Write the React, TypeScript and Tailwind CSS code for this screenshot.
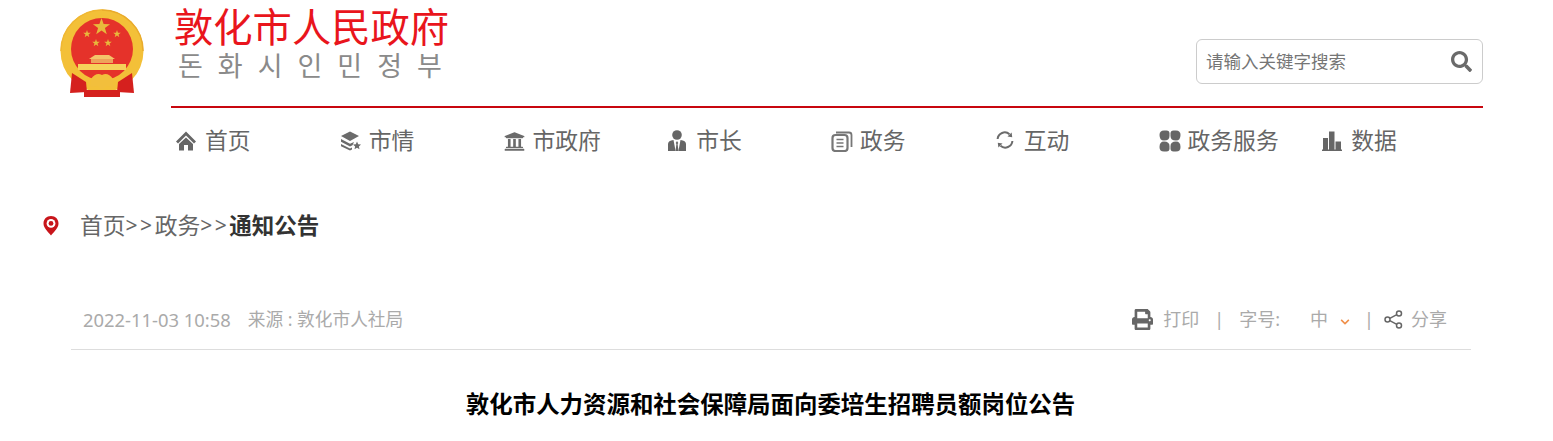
import type { ReactNode } from 'react';
import { FaSearch, FaPrint, FaUniversity, FaChevronDown } from 'react-icons/fa';

const HomeIcon = () => (
  <svg width="20" height="20" viewBox="0 0 20 20" fill="#666">
    <path d="M10 0.5 L20 10.5 L18 12.4 L10 4.6 L2 12.4 L0 10.5 Z" />
    <path d="M10 6.4 L17 13 V19.5 H12 V14 H8 V19.5 H3 V13 Z" />
  </svg>
);

const BooksIcon = () => (
  <svg width="22" height="20" viewBox="0 0 22 20" fill="#6b6b6b">
    <path d="M10 0.5 L19 5 L10 10 L1 5 Z" />
    <path d="M1 8 L10 12.8 L14 11 L12.5 14.2 L10 15.5 L1 10.8 Z" />
    <path d="M1 13 L10 17.5 L12 16.5 L12 18.6 L10 19.6 L1 15.2 Z" />
    <path d="M17 10.5 L18.2 13.2 L21 13.5 L18.9 15.4 L19.5 18.2 L17 16.8 L14.5 18.2 L15.1 15.4 L13 13.5 L15.8 13.2 Z" />
  </svg>
);

const UserIcon = () => (
  <svg width="20" height="22" viewBox="0 0 20 22" fill="#666">
    <circle cx="10" cy="5" r="4.8" />
    <path d="M1 21 V14 C1 11.5 3 10.5 6.5 10 L8.6 21 Z" />
    <path d="M19 21 V14 C19 11.5 17 10.5 13.5 10 L11.4 21 Z" />
    <path d="M10 11 L11.3 13 L10.6 14 L11.5 21 H8.5 L9.4 14 L8.7 13 Z" />
  </svg>
);

const CopyIcon = () => (
  <svg width="22" height="22" viewBox="0 0 22 22" fill="none" stroke="#777" strokeWidth="2.2">
    <rect x="1.5" y="5" width="15" height="16" rx="3" />
    <path d="M5 2.5 H18 Q20.5 2.5 20.5 5 V17" strokeWidth="1.8" />
    <path d="M5.5 9.5 H12.5 M5.5 13 H12.5 M5.5 16.5 H12.5" strokeWidth="1.6" />
  </svg>
);

const RefreshIcon = () => (
  <svg width="20" height="20" viewBox="0 0 20 20" fill="none" stroke="#6b6b6b" strokeWidth="2">
    <path d="M2.6 8 A7.2 7.2 0 0 1 14.5 3.2" />
    <path d="M17.4 10 A7.2 7.2 0 0 1 5.5 14.8" />
    <path d="M12.5 5.6 L17.2 6.2 L16.6 1.4 Z" fill="#6b6b6b" stroke="none" />
    <path d="M7.5 12.4 L2.8 11.8 L3.4 16.6 Z" fill="#6b6b6b" stroke="none" />
  </svg>
);

const GridIcon = () => (
  <svg width="22" height="22" viewBox="0 0 22 22" fill="#666">
    <path d="M5 0.5 H7.5 Q10.5 0.5 10.5 3.5 V6 Q10.5 10.5 5 10.5 Q0.5 10.5 0.5 5 Q0.5 0.5 5 0.5 Z" />
    <path d="M17 0.5 H14.5 Q11.5 0.5 11.5 3.5 V6 Q11.5 10.5 17 10.5 Q21.5 10.5 21.5 5 Q21.5 0.5 17 0.5 Z" />
    <path d="M5 21.5 H7.5 Q10.5 21.5 10.5 18.5 V16 Q10.5 11.5 5 11.5 Q0.5 11.5 0.5 17 Q0.5 21.5 5 21.5 Z" />
    <path d="M17 21.5 H14.5 Q11.5 21.5 11.5 18.5 V16 Q11.5 11.5 17 11.5 Q21.5 11.5 21.5 17 Q21.5 21.5 17 21.5 Z" />
  </svg>
);

const BarsIcon = () => (
  <svg width="20" height="20" viewBox="0 0 20 20" fill="#666">
    <rect x="1" y="7" width="5" height="12" />
    <rect x="7" y="0.5" width="5.5" height="18.5" />
    <rect x="13.5" y="10.5" width="5.5" height="8.5" />
    <rect x="0" y="18.5" width="20" height="1.5" />
  </svg>
);

const ShareIcon = () => (
  <svg width="19" height="19" viewBox="0 0 19 19" fill="none" stroke="#666" strokeWidth="1.5">
    <circle cx="3.5" cy="9.5" r="2.5" />
    <circle cx="15" cy="3.5" r="2.5" />
    <circle cx="15" cy="15.5" r="2.5" />
    <path d="M5.8 8.3 L12.8 4.6 M5.8 10.7 L12.8 14.4" />
  </svg>
);

const PinIcon = () => (
  <svg width="16" height="20" viewBox="0 0 16 20">
    <path d="M8 0 C3.6 0 0.5 3.2 0.5 7.4 C0.5 12 5 15.5 8 19.5 C11 15.5 15.5 12 15.5 7.4 C15.5 3.2 12.4 0 8 0 Z" fill="#c8151b" />
    <circle cx="8" cy="7.4" r="4.4" fill="#fff" />
    <circle cx="8" cy="7.4" r="2.4" fill="#c8151b" />
  </svg>
);

const star = (cx: number, cy: number, r: number) => {
  const pts: string[] = [];
  for (let i = 0; i < 10; i++) {
    const a = (Math.PI / 5) * i - Math.PI / 2;
    const rad = i % 2 === 0 ? r : r * 0.4;
    pts.push(`${(cx + rad * Math.cos(a)).toFixed(2)},${(cy + rad * Math.sin(a)).toFixed(2)}`);
  }
  return pts.join(' ');
};

const Emblem = () => (
  <svg width="84" height="90" viewBox="0 0 84 90" className="blur-[0.5px]">
    <circle cx="42" cy="42" r="41.5" fill="#f3c038" />
    <path d="M42 1 A41 41 0 0 1 83 42" fill="none" stroke="#e9ab2c" strokeWidth="1.5" />
    <path d="M1 42 A41 41 0 0 1 42 1" fill="none" stroke="#f0b733" strokeWidth="1.5" />
    <circle cx="42" cy="40" r="31" fill="#e5322a" />
    <polygon points={star(41.5, 18, 9)} fill="#e8b93c" />
    <polygon points={star(27, 25, 4)} fill="#e8b93c" />
    <polygon points={star(57, 25, 4)} fill="#e8b93c" />
    <polygon points={star(36, 34, 4)} fill="#e8b93c" />
    <polygon points={star(48, 34, 4)} fill="#e8b93c" />
    <path d="M35 46 L29 50 H55 L49 46 Z" fill="#f4c56a" />
    <rect x="31" y="50" width="22" height="4" fill="#eea35a" />
    <rect x="18" y="55" width="48" height="6" fill="#f6d25a" />
    <path d="M12 64 L10 84 L27 83 L26 73 Z" fill="#d5201e" />
    <path d="M72 64 L74 84 L57 83 L58 73 Z" fill="#d5201e" />
    <path d="M24 81 H60 V88 H24 Z" fill="#d5201e" />
    <path d="M31 70 Q36 63 42 66 Q48 63 53 70 L54 78 L46 77 L42 81 L38 77 L30 78 Z" fill="#f2bf3c" />
  </svg>
);

const NavItem = ({ icon, label }: { icon: ReactNode; label: string }) => (
  <a className="flex w-[163.75px] items-center">
    <span className="flex w-[34px] justify-start pl-[5px]">{icon}</span>
    <span>{label}</span>
  </a>
);

const navItems = [
  { icon: <HomeIcon />, label: '首页' },
  { icon: <BooksIcon />, label: '市情' },
  { icon: <FaUniversity size={21} color="#6b6b6b" />, label: '市政府' },
  { icon: <UserIcon />, label: '市长' },
  { icon: <CopyIcon />, label: '政务' },
  { icon: <RefreshIcon />, label: '互动' },
  { icon: <GridIcon />, label: '政务服务' },
  { icon: <BarsIcon />, label: '数据' },
];

export default function App() {
  return (
    <div className="h-[441px] w-[1553px] overflow-hidden bg-white font-['Noto_Sans','Noto_Sans_CJK_SC',sans-serif] text-[#666]">
      <header className="flex items-start pl-[60px]">
        <div className="mr-[27px] mt-[9px] w-[84px]">
          <Emblem />
        </div>
        <div className="w-[1312px]">
          <div className="flex h-[108px] items-start justify-between border-b-2 border-[#c8070f]">
            <div className="pl-[3px]">
              <div className="mt-[4px] text-[39.3px] leading-[46px] text-[#e9151c]">敦化市人民政府</div>
              <div className="pl-[4px] font-['Noto_Sans_CJK_KR',sans-serif] text-[27px] leading-[30px] tracking-[15px] text-[#8a8a8a]">
                돈화시인민정부
              </div>
            </div>
            <div className="mt-[39px] flex h-[45px] w-[287px] items-center justify-between rounded-[6px] border border-[#ccc] pl-[9px] pr-[10px]">
              <span className="text-[17.5px] text-[#757575]">请输入关键字搜索</span>
              <FaSearch size={21} color="#6a6a6a" />
            </div>
          </div>
          <nav className="flex h-[66px] items-center text-[22.8px] text-[#666]">
            {navItems.map(item => (
              <NavItem key={item.label} icon={item.icon} label={item.label} />
            ))}
          </nav>
        </div>
      </header>

      <div className="mt-[32px] flex h-[40px] items-center pl-[43px] text-[22.8px]">
        <span className="w-[37px]">
          <PinIcon />
        </span>
        <span>首页</span>
        <span className="text-[21px] tracking-[2.5px]">&gt;&gt;</span>
        <span>政务</span>
        <span className="text-[21px] tracking-[2.5px]">&gt;&gt;</span>
        <span className="text-[22.5px] font-bold text-[#333]">通知公告</span>
      </div>

      <div className="ml-[71px] mt-[44px] flex h-[60px] w-[1400px] items-center justify-between border-b border-[#ddd] pl-[12px] pr-[24px] text-[18px] text-[#aaa]">
        <div className="flex gap-[17px]">
          <span className="text-[18.4px]">2022-11-03 10:58</span>
          <span className="text-[17.7px]">来源 : 敦化市人社局</span>
        </div>
        <div className="flex items-center">
          <FaPrint size={21} color="#666" />
          <span className="ml-[10px]">打印</span>
          <span className="ml-[15px]">|</span>
          <span className="ml-[15px]">字号:</span>
          <span className="ml-[30px]">中</span>
          <FaChevronDown size={10} color="#f0904a" className="ml-[12px] mt-[4px]" />
          <span className="ml-[14px]">|</span>
          <span className="ml-[10px]"><ShareIcon /></span>
          <span className="ml-[8px]">分享</span>
        </div>
      </div>

      <h1 className="mt-[36px] pr-[12px] text-center text-[23.45px] font-bold leading-[36px] text-black">
        敦化市人力资源和社会保障局面向委培生招聘员额岗位公告
      </h1>
    </div>
  );
}
